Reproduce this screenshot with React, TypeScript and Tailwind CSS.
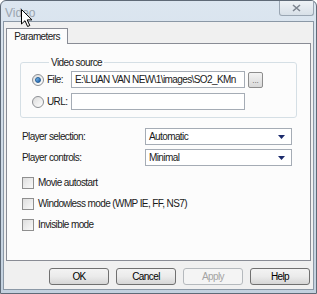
import React from "react";

const Radio = ({ checked }: { checked?: boolean }) => (
  <span className="w-[12px] h-[12px] rounded-full border border-[#8c8f94] bg-gradient-to-br from-[#dcdcdc] to-[#ffffff] flex items-center justify-center shrink-0">
    {checked && (
      <span className="w-[6px] h-[6px] rounded-full bg-gradient-to-br from-[#7ec2f0] to-[#1c5aa8] border border-[#245d94]" />
    )}
  </span>
);

const Checkbox = () => (
  <span className="w-[12px] h-[12px] border border-[#8f8f8f] bg-gradient-to-br from-[#dedede] to-[#fafafa] shrink-0" />
);

const Select = ({ value }: { value: string }) => (
  <div className="w-[147px] h-[17px] border border-[#a5acb5] bg-white flex items-center justify-between pl-[3px] pr-[6px]">
    <span>{value}</span>
    <svg width="7" height="4" viewBox="0 0 7 4">
      <path d="M0 0h7L3.5 4z" fill="#1b2a6b" />
    </svg>
  </div>
);

const Button = ({ label, disabled }: { label: string; disabled?: boolean }) => (
  <div
    className={
      disabled
        ? "w-[60px] h-[17px] rounded-[3px] border border-[#b5b9bd] bg-[#f4f4f4] text-[#a3a3a3] flex items-center justify-center"
        : "w-[60px] h-[17px] rounded-[3px] border border-[#707070] bg-gradient-to-b from-[#f3f3f3] via-[#ebebeb] to-[#d6d6d6] text-black flex items-center justify-center"
    }
  >
    {label}
  </div>
);

const App = () => {
  return (
    <div className="relative w-[317px] h-[294px] flex flex-col border border-[#5f6a77] rounded-t-[6px] bg-gradient-to-b from-[#dce6f0] via-[#cfdbe7] to-[#c3d1df] overflow-hidden font-['Liberation_Sans',Arial,sans-serif] text-[10px] tracking-[-0.6px] text-[#1a1a1a]">
      {/* title bar */}
      <div className="h-[20px] flex items-start justify-between shrink-0">
        <span className="pl-[4px] pt-[3px] text-[12px] tracking-normal text-[#9aa4ae]">Video</span>
        <div className="mr-[2px] w-[35px] h-[15px] border border-[#9aa6b3] border-t-0 rounded-b-[3px] bg-gradient-to-b from-[#eef2f6] to-[#d8e0e8] flex items-center justify-center">
          <svg width="9" height="8" viewBox="0 0 9 8">
            <path d="M1 1l7 6M8 1L1 7" stroke="#7d8590" strokeWidth="1.6" fill="none" />
          </svg>
        </div>
      </div>

      {/* client area */}
      <div className="flex-1 mx-[2px] mb-[3px] bg-[#f0f0f0] border border-[#8b98a6] flex flex-col pl-[2px] pr-[2px] pt-[6px]">
        {/* tab header */}
        <div className="flex">
          <div className="relative z-10 -mb-px w-[62px] h-[16px] bg-[#fcfcfc] border border-b-0 border-[#898c95] flex items-center justify-center">
            Parameters
          </div>
        </div>

        {/* tab panel */}
        <div className="h-[218px] bg-[#fcfcfc] border border-[#898c95] flex flex-col">
          <fieldset className="mt-[12px] mx-[13px] border border-[#d5dfe5] rounded-[3px] pl-[11px] pr-[2px] pt-[2px] pb-[7px]">
            <legend className="ml-[17px] px-[2px] leading-[13px]">Video source</legend>
            <div className="flex items-center h-[17px]">
              <Radio checked />
              <span className="ml-[3px] w-[24px]">File:</span>
              <div className="w-[174px] h-[17px] border border-[#a5acb5] bg-white flex items-center pl-[3px] overflow-hidden whitespace-nowrap">
                E:\LUAN VAN NEW\1\images\SO2_KMn
              </div>
              <div className="ml-[3px] w-[15px] h-[16px] rounded-[2px] border border-[#8d8d8d] bg-gradient-to-b from-[#f3f3f3] to-[#d9d9d9] flex items-end justify-center pb-[3px] text-[8px] tracking-normal leading-[6px] text-[#555]">
                ...
              </div>
            </div>
            <div className="flex items-center h-[17px] mt-[5px]">
              <Radio />
              <span className="ml-[3px] w-[24px]">URL:</span>
              <div className="w-[174px] h-[17px] border border-[#a5acb5] bg-white" />
            </div>
          </fieldset>

          <div className="mt-[10px] pl-[15px] flex flex-col gap-[4px]">
            <div className="flex items-center">
              <span className="w-[123px]">Player selection:</span>
              <Select value="Automatic" />
            </div>
            <div className="flex items-center">
              <span className="w-[123px]">Player controls:</span>
              <Select value="Minimal" />
            </div>
          </div>

          <div className="mt-[10px] pl-[15px] flex flex-col gap-[8px]">
            {["Movie autostart", "Windowless mode (WMP IE, FF, NS7)", "Invisible mode"].map((t) => (
              <div key={t} className="flex items-center h-[13px]">
                <Checkbox />
                <span className="ml-[4px]">{t}</span>
              </div>
            ))}
          </div>
        </div>

        {/* buttons */}
        <div className="mt-[7px] flex justify-end gap-[7px] pr-[1px]">
          <Button label="OK" />
          <Button label="Cancel" />
          <Button label="Apply" disabled />
          <Button label="Help" />
        </div>
      </div>

      {/* mouse cursor */}
      <svg className="absolute left-[20px] top-[8px]" width="12" height="18" viewBox="0 0 12 18">
        <path
          d="M0.5 0.5v14.5l3.5-3.3 2.6 5.8 2.2-1-2.6-5.6h4.8z"
          fill="#fff"
          stroke="#000"
          strokeWidth="1"
          strokeLinejoin="round"
        />
      </svg>
    </div>
  );
};

export default App;
